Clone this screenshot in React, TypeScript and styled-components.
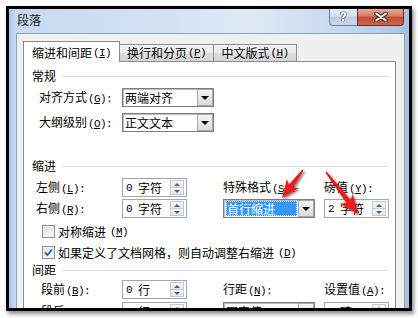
import React from "react";
import styled, { createGlobalStyle } from "styled-components";

const GlobalStyle = createGlobalStyle`
  html, body { margin: 0; padding: 0; background: #fff; }
  body {
    font-family: "Noto Sans CJK SC", "Noto Sans", sans-serif;
    font-size: 12px;
    color: #000;
  }
  u { text-decoration-thickness: 1px; text-underline-offset: 1px; }
`;

type Pt = [number, number];

function arrowPoints(tail: Pt, tip: Pt, headLen: number, headHalf: number): string {
  const dx = tip[0] - tail[0];
  const dy = tip[1] - tail[1];
  const len = Math.hypot(dx, dy);
  const ux = dx / len;
  const uy = dy / len;
  const nx = -uy;
  const ny = ux;
  const bx = tip[0] - ux * headLen;
  const by = tip[1] - uy * headLen;
  const pts: Pt[] = [
    [tail[0] + nx * 0.8, tail[1] + ny * 0.8],
    [bx + nx * 2.6, by + ny * 2.6],
    [bx + nx * headHalf - ux * 3, by + ny * headHalf - uy * 3],
    tip,
    [bx - nx * headHalf - ux * 3, by - ny * headHalf - uy * 3],
    [bx - nx * 2.6, by - ny * 2.6],
    [tail[0] - nx * 0.8, tail[1] - ny * 0.8],
  ];
  return pts.map((p) => p.map((v) => v.toFixed(1)).join(",")).join(" ");
}

// accelerator suffix like "(G):" drawn with half-width latin glyphs
function Acc({ k, colon }: { k: string; colon?: boolean }) {
  return (
    <Half>
      (<u>{k}</u>){colon ? ":" : ""}
    </Half>
  );
}

export default function App() {
  return (
    <Page>
      <GlobalStyle />
      <Frame>
        <TitleBar>
          <Title>段落</Title>
          <CaptionButtons>
            <HelpButton>?</HelpButton>
            <CloseButton>
              <svg width="14" height="10" viewBox="0 0 14 10">
                <path d="M2 1.5 L12 8.5 M12 1.5 L2 8.5" stroke="#3b2a28" strokeWidth="4" strokeLinecap="round" />
                <path d="M2 1.5 L12 8.5 M12 1.5 L2 8.5" stroke="#fff" strokeWidth="2" strokeLinecap="round" />
              </svg>
            </CloseButton>
          </CaptionButtons>
        </TitleBar>
        <Body>
          <Client>
            <TabRow>
              <Tab $active $width={97}>缩进和间距<Acc k="I" /></Tab>
              <Tab $width={95}>换行和分页<Acc k="P" /></Tab>
              <Tab $width={84}>中文版式<Acc k="H" /></Tab>
            </TabRow>
            <Panel>
              <SectionHeader $top={7}>
                常规
                <Rule />
              </SectionHeader>
              <FieldRow $top={5}>
                <Label $width={83}>对齐方式<Acc k="G" colon /></Label>
                <Combo $width={92}>
                  <ComboText>两端对齐</ComboText>
                  <DropButton><DropArrow /></DropButton>
                </Combo>
              </FieldRow>
              <FieldRow $top={6}>
                <Label $width={83}>大纲级别<Acc k="O" colon /></Label>
                <Combo $width={92}>
                  <ComboText>正文文本</ComboText>
                  <DropButton><DropArrow /></DropButton>
                </Combo>
              </FieldRow>

              <SectionHeader $top={27}>
                缩进
                <Rule />
              </SectionHeader>
              <FieldGrid $top={5} $indent={4} $labelWidth={86} $rowGap={2}>
                <Label>左侧<Acc k="L" colon /></Label>
                <Spin num="0" unit="字符" />
                <Label>特殊格式<Acc k="S" colon /></Label>
                <Label>磅值<Acc k="Y" colon /></Label>
                <Label>右侧<Acc k="R" colon /></Label>
                <Spin num="0" unit="字符" />
                <Combo $width={92}>
                  <ComboText>
                    <Selected>首行缩进</Selected>
                  </ComboText>
                  <DropButton><DropArrow /></DropButton>
                </Combo>
                <Spin num="2" unit="字符" />
              </FieldGrid>
              <CheckRow $top={7}>
                <CheckBox />
                对称缩进<Acc k="M" />
              </CheckRow>
              <CheckRow $top={8}>
                <CheckBox $checked>
                  <svg width="9" height="9" viewBox="0 0 9 9">
                    <path d="M1 4.5 L3.5 7 L8 1.5" fill="none" stroke="#3a58a6" strokeWidth="1.8" />
                  </svg>
                </CheckBox>
                如果定义了文档网格，则自动调整右缩进<Acc k="D" />
              </CheckRow>

              <SectionHeader $top={4}>
                间距
                <Rule />
              </SectionHeader>
              <FieldGrid $top={3} $indent={9} $labelWidth={81} $rowGap={3}>
                <Label>段前<Acc k="B" colon /></Label>
                <Spin num="0" unit="行" />
                <Label>行距<Acc k="N" colon /></Label>
                <Label>设置值<Acc k="A" colon /></Label>
                <Label>段后<Acc k="F" colon /></Label>
                <Spin num="0" unit="行" />
                <Combo $width={92}>
                  <ComboText>固定值</ComboText>
                  <DropButton><DropArrow /></DropButton>
                </Combo>
                <Spin num="1" unit="磅" />
              </FieldGrid>
            </Panel>
          </Client>
        </Body>
      </Frame>
      <Annotations width="418" height="318" viewBox="0 0 418 318">
        <defs>
          <filter id="shade" x="-30%" y="-30%" width="160%" height="160%">
            <feDropShadow dx="1.5" dy="1.5" stdDeviation="1.2" floodColor="#000" floodOpacity="0.55" />
          </filter>
        </defs>
        <polygon points={arrowPoints([303, 170], [282, 198], 15, 7.5)} fill="#ea1c1c" filter="url(#shade)" />
        <polygon points={arrowPoints([326, 172], [358, 214], 16, 8)} fill="#ea1c1c" filter="url(#shade)" />
      </Annotations>
    </Page>
  );
}

function Spin({ num, unit }: { num: string; unit: string }) {
  return (
    <SpinBox>
      <SpinText>
        <Half>{num}&nbsp;</Half>
        {unit}
      </SpinText>
      <SpinButtons>
        <SpinHalf>
          <SpinArrow $up />
        </SpinHalf>
        <SpinHalf>
          <SpinArrow />
        </SpinHalf>
      </SpinButtons>
    </SpinBox>
  );
}

const Page = styled.div`
  position: relative;
  width: 418px;
  height: 318px;
  padding: 6px 0 0 6px;
  box-sizing: border-box;
  overflow: hidden;
`;

const Frame = styled.div`
  width: 400px;
  height: 299px;
  border: 3px solid #000;
  box-shadow: 2px 3px 4px rgba(0, 0, 0, 0.45);
  overflow: hidden;
  display: flex;
  flex-direction: column;
  background: linear-gradient(
    90deg,
    #a9c3e3 0px,
    #c6daf0 6px,
    #d3e2f3 40%,
    #dfe9f5 60%,
    #c4d8ee 85%,
    #a8c2e2 100%
  );
`;

const TitleBar = styled.div`
  height: 24px;
  display: flex;
  align-items: flex-start;
`;

const Title = styled.div`
  padding: 4px 0 0 8px;
  line-height: 14px;
  color: #1b1b1b;
`;

const CaptionButtons = styled.div`
  margin-left: auto;
  margin-right: 5px;
  display: flex;
`;

const HelpButton = styled.div`
  width: 28px;
  height: 17px;
  box-sizing: border-box;
  border: 1px solid #6f7f96;
  border-top: none;
  border-right: none;
  border-radius: 0 0 0 4px;
  background: linear-gradient(#e6eef7 0%, #d3dfee 45%, #bccde3 50%, #c9d8ea 100%);
  display: flex;
  align-items: center;
  justify-content: center;
  font-family: "DejaVu Sans", sans-serif;
  font-weight: bold;
  font-size: 12px;
  color: #fff;
  text-shadow: 0 0 1px #333, 0 0 1px #333, 0 0 1px #333;
`;

const CloseButton = styled.div`
  width: 47px;
  height: 17px;
  box-sizing: border-box;
  border: 1px solid #6a2c24;
  border-top: none;
  border-radius: 0 0 4px 0;
  background: linear-gradient(#e9a999 0%, #d67a66 45%, #c54c35 50%, #d0634a 100%);
  display: flex;
  align-items: center;
  justify-content: center;
`;

const Body = styled.div`
  flex: 1;
  min-height: 0;
  display: flex;
  padding: 0 5px 0 7px;
`;

const Client = styled.div`
  flex: 1;
  display: flex;
  flex-direction: column;
  background: #f0f0f0;
  border: 1px solid #8fa2bb;
  border-bottom: none;
  padding: 7px 8px 0 6px;
`;

const TabRow = styled.div`
  display: flex;
  align-items: flex-end;
  height: 21px;
  margin-bottom: -1px;
  position: relative;
  z-index: 1;
`;

const Tab = styled.div<{ $active?: boolean; $width: number }>`
  width: ${(p) => p.$width}px;
  height: ${(p) => (p.$active ? 21 : 18)}px;
  box-sizing: border-box;
  border: 1px solid #898c95;
  border-bottom: ${(p) => (p.$active ? "none" : "1px solid #898c95")};
  margin-left: ${(p) => (p.$active ? 0 : -1)}px;
  background: ${(p) =>
    p.$active ? "#fff" : "linear-gradient(#f3f3f3 0%, #ebebeb 50%, #dedede 50%, #d6d6d6 100%)"};
  display: flex;
  align-items: center;
  justify-content: center;
  padding-top: ${(p) => (p.$active ? 1 : 0)}px;
  line-height: 14px;
  white-space: nowrap;
  &:first-child {
    margin-left: 0;
    position: relative;
    z-index: 2;
  }
`;

const Half = styled.span`
  font-family: "Liberation Mono", "DejaVu Sans Mono", monospace;
  font-size: 11px;
  letter-spacing: -0.6px;
  margin-left: 1px;
`;

const Panel = styled.div`
  flex: 1;
  background: #fff;
  border: 1px solid #898c95;
  border-bottom: none;
  padding: 0 6px 0 8px;
  display: flex;
  flex-direction: column;
`;

const SectionHeader = styled.div<{ $top: number }>`
  margin-top: ${(p) => p.$top}px;
  height: 14px;
  line-height: 14px;
  display: flex;
  align-items: center;
  gap: 6px;
  flex-shrink: 0;
`;

const Rule = styled.div`
  flex: 1;
  height: 1px;
  background: #d5dfe5;
`;

const FieldRow = styled.div<{ $top: number }>`
  margin-top: ${(p) => p.$top}px;
  height: 19px;
  padding-left: 7px;
  display: flex;
  align-items: center;
  flex-shrink: 0;
`;

const Label = styled.div<{ $width?: number }>`
  width: ${(p) => (p.$width ? `${p.$width}px` : "auto")};
  flex-shrink: 0;
  line-height: 14px;
  white-space: nowrap;
`;

const Combo = styled.div<{ $width: number }>`
  width: ${(p) => p.$width}px;
  height: 19px;
  box-sizing: border-box;
  border: 1px solid #7d7d7d;
  box-shadow: inset 1px 1px 0 #bdbdbd;
  background: #fff;
  display: flex;
  align-items: stretch;
  flex-shrink: 0;
`;

const ComboText = styled.div`
  flex: 1;
  display: flex;
  align-items: center;
  padding: 1px 1px 1px 2px;
  line-height: 14px;
  white-space: nowrap;
`;

const Selected = styled.span`
  flex: 1;
  align-self: stretch;
  display: flex;
  align-items: center;
  padding-left: 1px;
  background: #3399ff;
  color: #fff;
  outline: 1px dotted #d8eaff;
  outline-offset: -1px;
`;

const DropButton = styled.div`
  width: 16px;
  box-sizing: border-box;
  border: 1px solid #a9a9a9;
  background: linear-gradient(#f4f4f4, #dcdcdc);
  display: flex;
  align-items: center;
  justify-content: center;
`;

const DropArrow = styled.span`
  width: 0;
  height: 0;
  border-left: 4px solid transparent;
  border-right: 4px solid transparent;
  border-top: 4px solid #000;
`;

const FieldGrid = styled.div<{ $top: number; $indent: number; $labelWidth: number; $rowGap: number }>`
  margin-top: ${(p) => p.$top}px;
  padding-left: ${(p) => p.$indent}px;
  display: grid;
  grid-template-columns: ${(p) => p.$labelWidth}px 101px 101px 65px;
  grid-auto-rows: 19px;
  row-gap: ${(p) => p.$rowGap}px;
  align-items: center;
  flex-shrink: 0;
`;

const SpinBox = styled.div`
  width: 65px;
  height: 19px;
  box-sizing: border-box;
  border: 1px solid #a3a7ad;
  background: #fff;
  display: flex;
  align-items: stretch;
`;

const SpinText = styled.div`
  flex: 1;
  padding-left: 2px;
  display: flex;
  align-items: center;
  white-space: nowrap;
`;

const SpinButtons = styled.div`
  width: 14px;
  margin: 1px 2px 1px 0;
  display: flex;
  flex-direction: column;
  border: 1px solid #c5cad2;
  box-sizing: border-box;
`;

const SpinHalf = styled.div`
  flex: 1;
  display: flex;
  align-items: center;
  justify-content: center;
  background: linear-gradient(#f7f8fa, #e3e7ec);
  & + & {
    border-top: 1px solid #c5cad2;
  }
`;

const SpinArrow = styled.span<{ $up?: boolean }>`
  width: 0;
  height: 0;
  border-left: 3px solid transparent;
  border-right: 3px solid transparent;
  ${(p) => (p.$up ? "border-bottom: 3px solid #4d6185;" : "border-top: 3px solid #4d6185;")}
`;

const CheckRow = styled.div<{ $top: number }>`
  margin-top: ${(p) => p.$top}px;
  height: 13px;
  padding-left: 10px;
  display: flex;
  align-items: center;
  gap: 3px;
  line-height: 14px;
  white-space: nowrap;
  flex-shrink: 0;
`;

const CheckBox = styled.div<{ $checked?: boolean }>`
  width: 13px;
  height: 13px;
  box-sizing: border-box;
  border: 1px solid #8e8f8f;
  background: linear-gradient(135deg, #d9dbde 0%, #eef0f2 60%, #fbfbfb 100%);
  box-shadow: inset 0 0 0 1px #f4f4f4;
  display: flex;
  align-items: center;
  justify-content: center;
`;

const Annotations = styled.svg`
  position: absolute;
  left: 0;
  top: 0;
  pointer-events: none;
`;
